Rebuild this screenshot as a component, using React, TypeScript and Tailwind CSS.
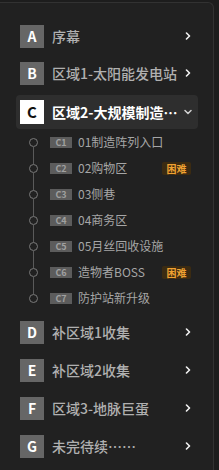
import React from "react";

type Main = { k: string; t: string };
const top: Main[] = [
  { k: "A", t: "序幕" },
  { k: "B", t: "区域1-太阳能发电站" },
];
const bottom: Main[] = [
  { k: "D", t: "补区域1收集" },
  { k: "E", t: "补区域2收集" },
  { k: "F", t: "区域3-地脉巨蛋" },
  { k: "G", t: "未完待续……" },
];
const subs = [
  { k: "C1", t: "01制造阵列入口", hard: false },
  { k: "C2", t: "02购物区", hard: true },
  { k: "C3", t: "03侧巷", hard: false },
  { k: "C4", t: "04商务区", hard: false },
  { k: "C5", t: "05月丝回收设施", hard: false },
  { k: "C6", t: "造物者BOSS", hard: true },
  { k: "C7", t: "防护站新升级", hard: false },
];

function ChevronRight() {
  return (
    <svg width="6" height="8" viewBox="0 0 6 8" className="shrink-0">
      <polyline points="1.5,1 4.5,4 1.5,7" fill="none" stroke="#f2f2f2" strokeWidth="1.6" strokeLinecap="round" strokeLinejoin="round" />
    </svg>
  );
}

function ChevronDown() {
  return (
    <svg width="8" height="6" viewBox="0 0 8 6" className="shrink-0">
      <polyline points="1,1.5 4,4.5 7,1.5" fill="none" stroke="#d0d0d0" strokeWidth="1.5" strokeLinecap="round" strokeLinejoin="round" />
    </svg>
  );
}

function MainRow({ k, t, className = "" }: Main & { className?: string }) {
  return (
    <div className={`flex h-[34px] items-center pl-[4px] pr-[7px] ${className}`}>
      <div className="flex h-[23px] w-[24px] shrink-0 items-center justify-center bg-[#666666] text-[14px] font-bold leading-[18px] text-white">
        {k}
      </div>
      <div className="ml-[8px] flex-1 whitespace-nowrap text-[14px] font-medium leading-[20px] text-[#b0b0b0]">{t}</div>
      <ChevronRight />
    </div>
  );
}

export default function App() {
  return (
    <div className="h-[470px] w-[219px] overflow-hidden bg-[#1d1d1d] font-['Noto_Sans_CJK_SC',sans-serif]">
      <div className="mt-[2px] h-[468px] w-[214px] rounded-tr-[6px] border-r border-t border-[#323232] bg-[#212121] pl-[16px] pr-[15px] pt-[16px]">
        <div className="flex flex-col">
          <MainRow {...top[0]} />
          <MainRow {...top[1]} className="mt-[3px]" />
          <div className="mt-[5px] flex h-[34px] items-center rounded-[4px] bg-[#2e2e2e] pl-[4px] pr-[6px]">
            <div className="flex h-[24px] w-[24px] shrink-0 items-center justify-center bg-white text-[15px] font-bold leading-[18px] text-[#111]">
              C
            </div>
            <div className="ml-[8px] flex-1 whitespace-nowrap text-[14px] font-bold leading-[20px] text-white">区域2-大规模制造…</div>
            <ChevronDown />
          </div>
          <div className="flex flex-col">
            {subs.map((s, i) => (
              <div key={s.k} className="relative flex h-[26px] items-center">
                {i > 0 && <div className="absolute left-[17px] top-0 h-[9px] w-px bg-[#5a5a5a]" />}
                {i < subs.length - 1 && <div className="absolute left-[17px] bottom-0 h-[9px] w-px bg-[#5a5a5a]" />}
                <div className="ml-[13px] h-[9px] w-[9px] shrink-0 rounded-full border border-[#7a7a7a]" />
                <div className="ml-[12px] flex h-[11px] w-[22px] shrink-0 items-center justify-center bg-[#5c5c5c] text-[9px] font-bold leading-[11px] text-[#a0a0a0]">
                  {s.k}
                </div>
                <div className="ml-[6px] flex-1 whitespace-nowrap text-[12px] leading-[16px] text-[#a6a6a6]">{s.t}</div>
                {s.hard && (
                  <div className="mr-[7px] flex h-[13px] w-[29px] items-center justify-center rounded-[2px] bg-[#3b2b12] text-[10px] font-bold leading-[13px] text-[#f0a232]">
                    困难
                  </div>
                )}
              </div>
            ))}
          </div>
          <MainRow {...bottom[0]} className="mt-[4px]" />
          <MainRow {...bottom[1]} className="mt-[4px]" />
          <MainRow {...bottom[2]} className="mt-[4px]" />
          <MainRow {...bottom[3]} className="mt-[4px]" />
        </div>
      </div>
    </div>
  );
}
